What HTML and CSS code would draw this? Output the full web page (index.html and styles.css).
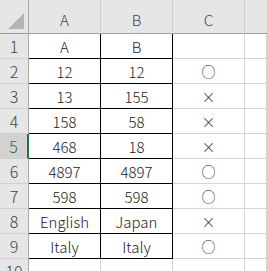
FILE: index.html
```html
<!DOCTYPE html>
<html lang="ja">
<head>
    <meta charset="UTF-8">
    <title>Sheet1</title>
    <link rel="stylesheet" href="styles.css">
</head>
<body>
    <div class="sheet">
        <div class="corner"><span class="cornerMark"></span></div>
        <div class="colHead">A</div>
        <div class="colHead">B</div>
        <div class="colHead">C</div>
        <div class="colHead last"></div>

        <div class="rowHead">1</div>
        <div class="cell boxed">A</div>
        <div class="cell boxed">B</div>
        <div class="cell"></div>
        <div class="cell"></div>

        <div class="rowHead">2</div>
        <div class="cell boxed">12</div>
        <div class="cell boxed">12</div>
        <div class="cell mark">○</div>
        <div class="cell"></div>

        <div class="rowHead">3</div>
        <div class="cell boxed">13</div>
        <div class="cell boxed">155</div>
        <div class="cell mark">×</div>
        <div class="cell"></div>

        <div class="rowHead">4</div>
        <div class="cell boxed">158</div>
        <div class="cell boxed">58</div>
        <div class="cell mark">×</div>
        <div class="cell"></div>

        <div class="rowHead active">5</div>
        <div class="cell boxed">468</div>
        <div class="cell boxed">18</div>
        <div class="cell mark">×</div>
        <div class="cell"></div>

        <div class="rowHead">6</div>
        <div class="cell boxed">4897</div>
        <div class="cell boxed">4897</div>
        <div class="cell mark">○</div>
        <div class="cell"></div>

        <div class="rowHead">7</div>
        <div class="cell boxed">598</div>
        <div class="cell boxed">598</div>
        <div class="cell mark">○</div>
        <div class="cell"></div>

        <div class="rowHead">8</div>
        <div class="cell boxed">English</div>
        <div class="cell boxed">Japan</div>
        <div class="cell mark">×</div>
        <div class="cell"></div>

        <div class="rowHead">9</div>
        <div class="cell boxed">Italy</div>
        <div class="cell boxed">Italy</div>
        <div class="cell mark">○</div>
        <div class="cell"></div>

        <div class="rowHead">10</div>
        <div class="cell"></div>
        <div class="cell"></div>
        <div class="cell"></div>
        <div class="cell"></div>
    </div>
</body>
</html>
```

FILE: styles.css
```css
body{
    margin: 0;
    padding: 0;
    background-color: #ffffff;
    font-family: 'Noto Sans CJK JP', 'Noto Sans', sans-serif;
    overflow: hidden;
}

.sheet{
    display: grid;
    grid-template-columns: 29px 72px 72px 72px 1fr;
    grid-template-rows: 34px repeat(10, 25px);
    width: 267px;
}

.corner, .colHead, .rowHead{
    box-sizing: border-box;
    background-color: #e6e6e6;
    color: #444444;
    display: flex;
    align-items: center;
    justify-content: center;
    font-weight: 300;
}

.corner{
    position: relative;
    border-right: 1px solid #ababab;
    border-bottom: 1px solid #9e9e9e;
}

.cornerMark{
    position: absolute;
    right: 4px;
    bottom: 4px;
    width: 0;
    height: 0;
    border-left: 16px solid transparent;
    border-bottom: 16px solid #b4b4b4;
}

.colHead{
    font-size: 15px;
    padding-top: 6px;
    border-right: 1px solid #d0d0d0;
    border-bottom: 1px solid #9e9e9e;
}

.colHead.last{
    border-right: none;
}

.rowHead{
    font-size: 16px;
    border-right: 1px solid #ababab;
    border-bottom: 1px solid #d0d0d0;
}

.rowHead.active{
    background-color: #d2d2d2;
    color: #217346;
    border-right: 2px solid #217346;
}

.cell{
    box-sizing: border-box;
    border-right: 1px solid #d4d4d4;
    border-bottom: 1px solid #d4d4d4;
    display: flex;
    align-items: center;
    justify-content: center;
    font-size: 15px;
    font-weight: 300;
    color: #222222;
}

.cell.boxed{
    border-right: 1px solid #000000;
    border-bottom: 1px solid #000000;
}

.cell.mark{
    font-size: 14px;
}
```
